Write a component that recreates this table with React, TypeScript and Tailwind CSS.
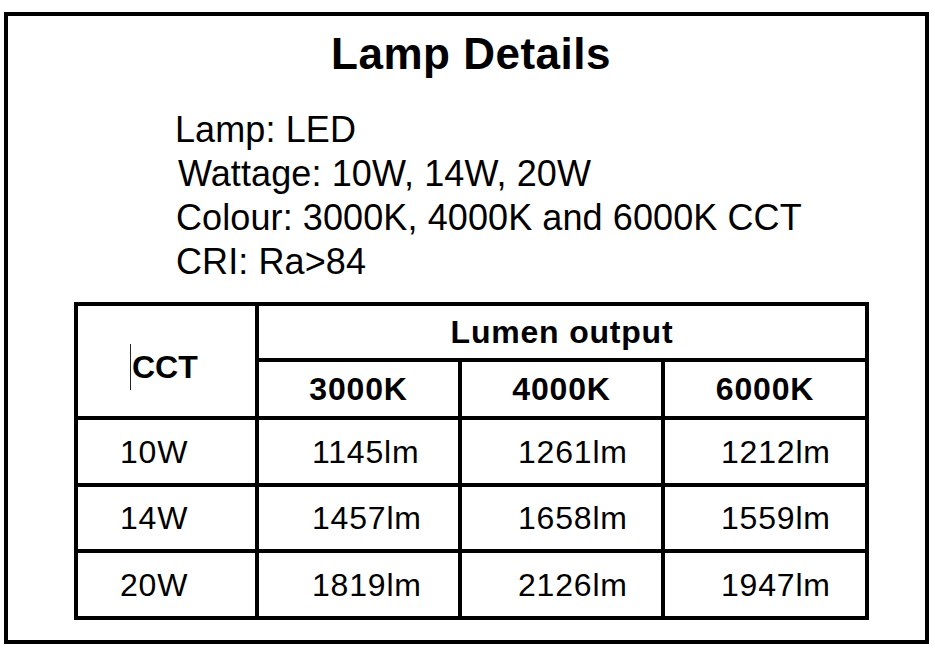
const font = { fontFamily: '"Liberation Sans", Arial, sans-serif' };

const specs = [
  { text: "Lamp: LED", cls: "pl-[167px]" },
  { text: "Wattage: 10W, 14W, 20W", cls: "pl-[170px]" },
  { text: "Colour: 3000K, 4000K and 6000K CCT", cls: "pl-[168px]" },
  { text: "CRI: Ra>84", cls: "pl-[168px]" },
];

const rows = [
  { watt: "10W", values: ["1145lm", "1261lm", "1212lm"] },
  { watt: "14W", values: ["1457lm", "1658lm", "1559lm"] },
  { watt: "20W", values: ["1819lm", "2126lm", "1947lm"] },
];

const valuePad = ["pl-[53px]", "pl-[56px]", "pl-[56px]"];

export default function App() {
  return (
    <div className="pl-[4px] pt-[12px] bg-white text-black" style={font}>
      <div className="flex h-[632px] w-[925px] flex-col border-4 border-black bg-white">
        <h1 className="mt-[16px] pl-[9px] text-center text-[44px] font-bold leading-[44px] tracking-[0.5px]">
          Lamp Details
        </h1>

        <div className="mt-[32px] flex flex-col text-[36px] leading-[44px] tracking-[0.1px]">
          {specs.map((s) => (
            <div key={s.text} className={s.cls}>
              {s.text}
            </div>
          ))}
        </div>

        <div className="ml-[66px] mt-[18px] grid w-[795px] grid-cols-[177px_199px_199px_200px] grid-rows-[52px_54px_63px_62px_63px] gap-[4px] bg-black p-[4px] text-[32px] leading-none tracking-[0.8px]">
          <div className="row-span-2 flex items-center bg-white pl-[52px] pt-[11px] font-bold tracking-normal">
            <span className="mr-[1px] inline-block h-[46px] w-px bg-neutral-800" />
            <span>CCT</span>
          </div>
          <div className="col-span-3 flex items-center justify-center bg-white font-bold">
            Lumen output
          </div>
          {["3000K", "4000K", "6000K"].map((k) => (
            <div key={k} className="flex items-center justify-center bg-white font-bold">
              {k}
            </div>
          ))}
          {rows.map((r) => (
            <>
              <div key={r.watt} className="flex items-center bg-white pl-[42px]">
                {r.watt}
              </div>
              {r.values.map((v, i) => (
                <div key={r.watt + v} className={`flex items-center bg-white ${valuePad[i]}`}>
                  {v}
                </div>
              ))}
            </>
          ))}
        </div>
      </div>
    </div>
  );
}
